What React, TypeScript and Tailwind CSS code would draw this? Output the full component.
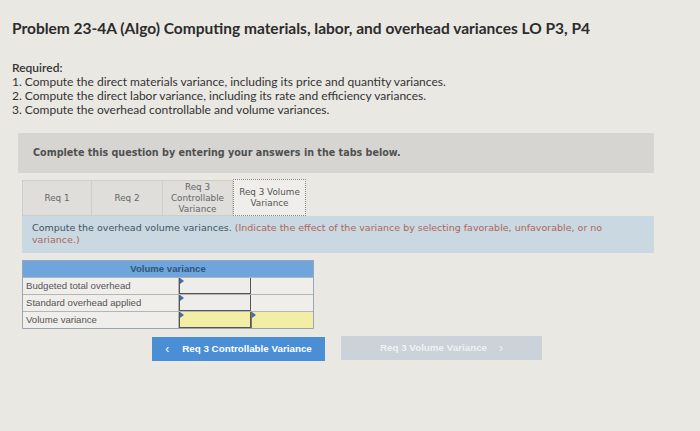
import React from "react";

function Marker() {
  return (
    <span className="absolute left-0 top-0 w-0 h-0 border-t-[3px] border-b-[3px] border-l-[4px] border-t-transparent border-b-transparent border-l-[#3b6fb0]" />
  );
}

export default function App() {
  return (
    <div className="w-[700px] h-[431px] bg-[#eae8e3] overflow-hidden relative" style={{ fontFamily: "Lato, 'Open Sans', sans-serif" }}>
      <div className="pl-[12px] pt-[18px]">
        <div className="text-[15.5px] leading-[20px] font-bold text-[#2c2c2c]">
          Problem 23-4A (Algo) Computing materials, labor, and overhead variances LO P3, P4
        </div>
        <div className="mt-[23px] text-[12px] leading-[14px] text-[#333]">
          <div className="font-semibold">Required:</div>
          <div>1. Compute the direct materials variance, including its price and quantity variances.</div>
          <div>2. Compute the direct labor variance, including its rate and efficiency variances.</div>
          <div>3. Compute the overhead controllable and volume variances.</div>
        </div>
      </div>

      <div className="ml-[18px] mt-[16px] w-[636px]" style={{ fontFamily: "'DejaVu Sans', Verdana, sans-serif" }}>
        <div className="h-[40px] bg-[#d6d5d1] flex items-center pl-[15px] text-[9.6px] font-bold text-[#505050]">
          Complete this question by entering your answers in the tabs below.
        </div>

        <div className="ml-[4px] mt-[7px]">
          <div className="flex h-[36px] text-[8.8px] leading-[11px] text-[#666]">
            <div className="w-[70px] bg-[#dfdeda] border border-[#cfcdc8] flex items-center justify-center">Req 1</div>
            <div className="w-[71px] bg-[#dfdeda] border border-l-0 border-[#cfcdc8] flex items-center justify-center">Req 2</div>
            <div className="w-[70px] bg-[#dfdeda] border border-l-0 border-[#cfcdc8] flex items-center justify-center text-center">
              Req 3<br />Controllable<br />Variance
            </div>
            <div className="w-[73px] bg-[#efeeea] border border-dotted border-[#888] flex items-center justify-center text-center text-[#555] -mt-[1px]">
              Req 3 Volume<br />Variance
            </div>
          </div>

          <div className="h-[37px] bg-[#c9d8e1] pl-[10px] pr-[8px] pt-[6px] text-[9.5px] leading-[12px]">
            <div className="flex whitespace-nowrap">
              <span className="text-[#3f5566]">Compute the overhead volume variances.&nbsp;</span>
              <span className="text-[#b0665c]">(Indicate the effect of the variance by selecting favorable, unfavorable, or no</span>
            </div>
            <div className="text-[#b0665c]">variance.)</div>
          </div>

          <div className="mt-[7px] w-[292px] border border-[#9aa6b2]" style={{ fontFamily: "'Liberation Sans', Arial, sans-serif" }}>
            <div className="h-[16px] bg-[#6ea5dc] flex items-center justify-center text-[9.6px] font-bold text-[#345476]">
              Volume variance
            </div>
            <div className="flex h-[17px] border-t border-[#b5b5b5] bg-[#efeeea] text-[9.6px] text-[#555]">
              <div className="w-[156px] pl-[3px] flex items-center border-r border-[#b5b5b5]">Budgeted total overhead</div>
              <div className="w-[72px] relative border border-[#555] border-t-0 bg-[#eeede9]"><Marker /></div>
              <div className="flex-1 bg-[#efeeea]" />
            </div>
            <div className="flex h-[17px] border-t border-[#b5b5b5] bg-[#efeeea] text-[9.6px] text-[#555]">
              <div className="w-[156px] pl-[3px] flex items-center border-r border-[#b5b5b5]">Standard overhead applied</div>
              <div className="w-[72px] relative border border-[#555] border-t-0 bg-[#eeede9]"><Marker /></div>
              <div className="flex-1 bg-[#efeeea]" />
            </div>
            <div className="flex h-[17px] border-t border-[#b5b5b5] bg-[#efeeea] text-[9.6px] text-[#555]">
              <div className="w-[156px] pl-[3px] flex items-center border-r border-[#b5b5b5]">Volume variance</div>
              <div className="w-[72px] relative border border-[#555] border-t-0 bg-[#f2eea6]"><Marker /></div>
              <div className="flex-1 relative bg-[#f2eea6] border-l border-[#777]"><Marker /></div>
            </div>
          </div>
        </div>
      </div>

      <div className="flex mt-[8px] pl-[152px] gap-[16px]" style={{ fontFamily: "'Liberation Sans', Arial, sans-serif" }}>
        <div className="w-[173px] h-[24px] bg-[#4a8ed6] flex items-center justify-center gap-[13px] text-white text-[9.8px] font-bold">
          <span className="text-[12px] font-normal">‹</span>
          <span>Req 3 Controllable Variance</span>
        </div>
        <div className="w-[201px] h-[24px] bg-[#cbd2d9] flex items-center justify-center gap-[12px] text-[#eef1f4] text-[9.8px] font-bold -mt-[1px]">
          <span>Req 3 Volume Variance</span>
          <span className="text-[12px] font-normal">›</span>
        </div>
      </div>
    </div>
  );
}
